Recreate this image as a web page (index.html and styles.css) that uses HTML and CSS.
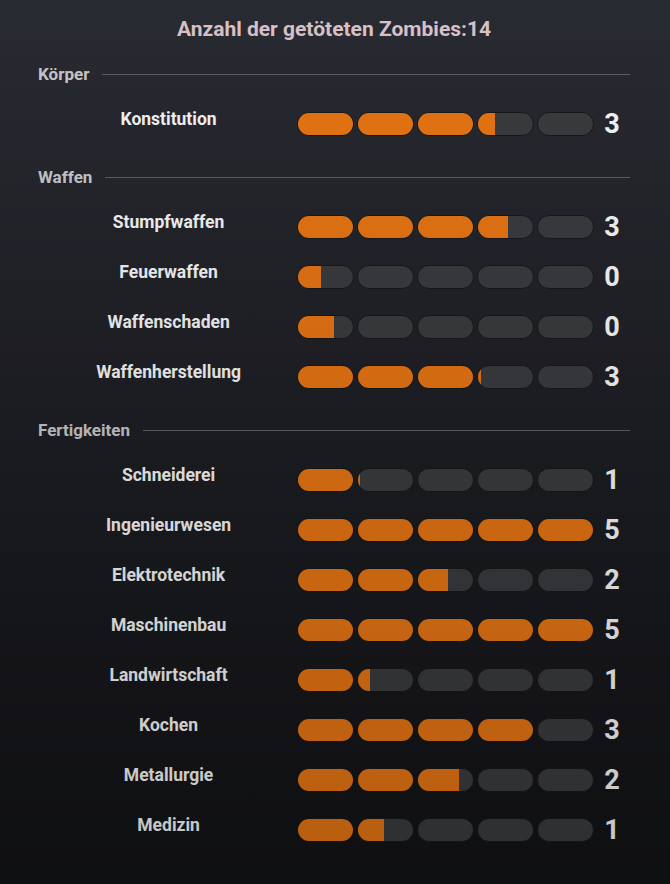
FILE: index.html
```html
<!DOCTYPE html>
<html lang="de">
<head>
<meta charset="utf-8">
<title>Zombies</title>
<link rel="stylesheet" href="styles.css">
</head>
<body>
<div class="panel">
  <h1 class="title">Anzahl der getöteten Zombies:14</h1>

  <div class="section"><span class="section-name">Körper</span><span class="rule"></span></div>
  <div class="row"><span class="label">Konstitution</span>
    <div class="bars"><div class="seg"><div class="fill" style="width:100%"></div></div><div class="seg"><div class="fill" style="width:100%"></div></div><div class="seg"><div class="fill" style="width:100%"></div></div><div class="seg"><div class="fill" style="width:30%"></div></div><div class="seg"></div></div>
    <span class="num">3</span></div>

  <div class="section"><span class="section-name">Waffen</span><span class="rule"></span></div>
  <div class="row"><span class="label">Stumpfwaffen</span>
    <div class="bars"><div class="seg"><div class="fill" style="width:100%"></div></div><div class="seg"><div class="fill" style="width:100%"></div></div><div class="seg"><div class="fill" style="width:100%"></div></div><div class="seg"><div class="fill" style="width:54%"></div></div><div class="seg"></div></div>
    <span class="num">3</span></div>
  <div class="row"><span class="label">Feuerwaffen</span>
    <div class="bars"><div class="seg"><div class="fill" style="width:41%"></div></div><div class="seg"></div><div class="seg"></div><div class="seg"></div><div class="seg"></div></div>
    <span class="num">0</span></div>
  <div class="row"><span class="label">Waffenschaden</span>
    <div class="bars"><div class="seg"><div class="fill" style="width:65%"></div></div><div class="seg"></div><div class="seg"></div><div class="seg"></div><div class="seg"></div></div>
    <span class="num">0</span></div>
  <div class="row"><span class="label">Waffenherstellung</span>
    <div class="bars"><div class="seg"><div class="fill" style="width:100%"></div></div><div class="seg"><div class="fill" style="width:100%"></div></div><div class="seg"><div class="fill" style="width:100%"></div></div><div class="seg"><div class="fill" style="width:6%"></div></div><div class="seg"></div></div>
    <span class="num">3</span></div>

  <div class="section"><span class="section-name">Fertigkeiten</span><span class="rule"></span></div>
  <div class="row"><span class="label">Schneiderei</span>
    <div class="bars"><div class="seg"><div class="fill" style="width:100%"></div></div><div class="seg"><div class="fill" style="width:4%"></div></div><div class="seg"></div><div class="seg"></div><div class="seg"></div></div>
    <span class="num">1</span></div>
  <div class="row"><span class="label">Ingenieurwesen</span>
    <div class="bars"><div class="seg"><div class="fill" style="width:100%"></div></div><div class="seg"><div class="fill" style="width:100%"></div></div><div class="seg"><div class="fill" style="width:100%"></div></div><div class="seg"><div class="fill" style="width:100%"></div></div><div class="seg"><div class="fill" style="width:100%"></div></div></div>
    <span class="num">5</span></div>
  <div class="row"><span class="label">Elektrotechnik</span>
    <div class="bars"><div class="seg"><div class="fill" style="width:100%"></div></div><div class="seg"><div class="fill" style="width:100%"></div></div><div class="seg"><div class="fill" style="width:54%"></div></div><div class="seg"></div><div class="seg"></div></div>
    <span class="num">2</span></div>
  <div class="row"><span class="label">Maschinenbau</span>
    <div class="bars"><div class="seg"><div class="fill" style="width:100%"></div></div><div class="seg"><div class="fill" style="width:100%"></div></div><div class="seg"><div class="fill" style="width:100%"></div></div><div class="seg"><div class="fill" style="width:100%"></div></div><div class="seg"><div class="fill" style="width:100%"></div></div></div>
    <span class="num">5</span></div>
  <div class="row"><span class="label">Landwirtschaft</span>
    <div class="bars"><div class="seg"><div class="fill" style="width:100%"></div></div><div class="seg"><div class="fill" style="width:21%"></div></div><div class="seg"></div><div class="seg"></div><div class="seg"></div></div>
    <span class="num">1</span></div>
  <div class="row"><span class="label">Kochen</span>
    <div class="bars"><div class="seg"><div class="fill" style="width:100%"></div></div><div class="seg"><div class="fill" style="width:100%"></div></div><div class="seg"><div class="fill" style="width:100%"></div></div><div class="seg"><div class="fill" style="width:100%"></div></div><div class="seg"></div></div>
    <span class="num">3</span></div>
  <div class="row"><span class="label">Metallurgie</span>
    <div class="bars"><div class="seg"><div class="fill" style="width:100%"></div></div><div class="seg"><div class="fill" style="width:100%"></div></div><div class="seg"><div class="fill" style="width:74%"></div></div><div class="seg"></div><div class="seg"></div></div>
    <span class="num">2</span></div>
  <div class="row"><span class="label">Medizin</span>
    <div class="bars"><div class="seg"><div class="fill" style="width:100%"></div></div><div class="seg"><div class="fill" style="width:47%"></div></div><div class="seg"></div><div class="seg"></div><div class="seg"></div></div>
    <span class="num">1</span></div>
</div>
</body>
</html>
```

FILE: styles.css
```css
html, body {
  margin: 0;
  padding: 0;
}

body {
  width: 670px;
  height: 884px;
  overflow: hidden;
  position: relative;
  font-family: Roboto, "Liberation Sans", sans-serif;
  background: linear-gradient(to bottom, #292b32 0%, #212228 35%, #18191d 70%, #121315 100%);
}

body::after {
  content: "";
  position: absolute;
  inset: 0;
  pointer-events: none;
  background: linear-gradient(to bottom, rgba(0,0,0,0) 0%, rgba(0,0,0,0.06) 30%, rgba(0,0,0,0.2) 100%);
}

.panel {
  display: flex;
  flex-direction: column;
  padding: 0 40px 0 38px;
}

.title {
  margin: 0;
  height: 46px;
  padding-top: 17px;
  box-sizing: border-box;
  text-align: center;
  font-size: 21px;
  line-height: 24px;
  font-weight: 700;
  color: #d8c1c8;
}

.section {
  height: 53px;
  padding-top: 3px;
  box-sizing: border-box;
  display: flex;
  align-items: center;
  gap: 13px;
}

.section-name {
  font-size: 17px;
  font-weight: 700;
  color: #c6c6ca;
}

.rule {
  flex: 1;
  height: 1px;
  background: #5e5f64;
}

.row {
  height: 50px;
  display: flex;
  align-items: center;
}

.label {
  width: 218px;
  margin-left: 22px;
  margin-right: 20px;
  padding-bottom: 10px;
  text-align: center;
  font-size: 17.5px;
  font-weight: 700;
  color: #f4f4f4;
}

.bars {
  display: flex;
  gap: 3px;
}

.seg {
  width: 57px;
  height: 24px;
  box-sizing: border-box;
  border: 1px solid #18181a;
  border-radius: 12px;
  background: #3a3b3e;
  overflow: hidden;
  display: flex;
}

.fill {
  height: 100%;
  background: #e57414;
}

.num {
  width: 36px;
  text-align: center;
  font-size: 27px;
  font-weight: 700;
  color: #f6f6f6;
}
```
